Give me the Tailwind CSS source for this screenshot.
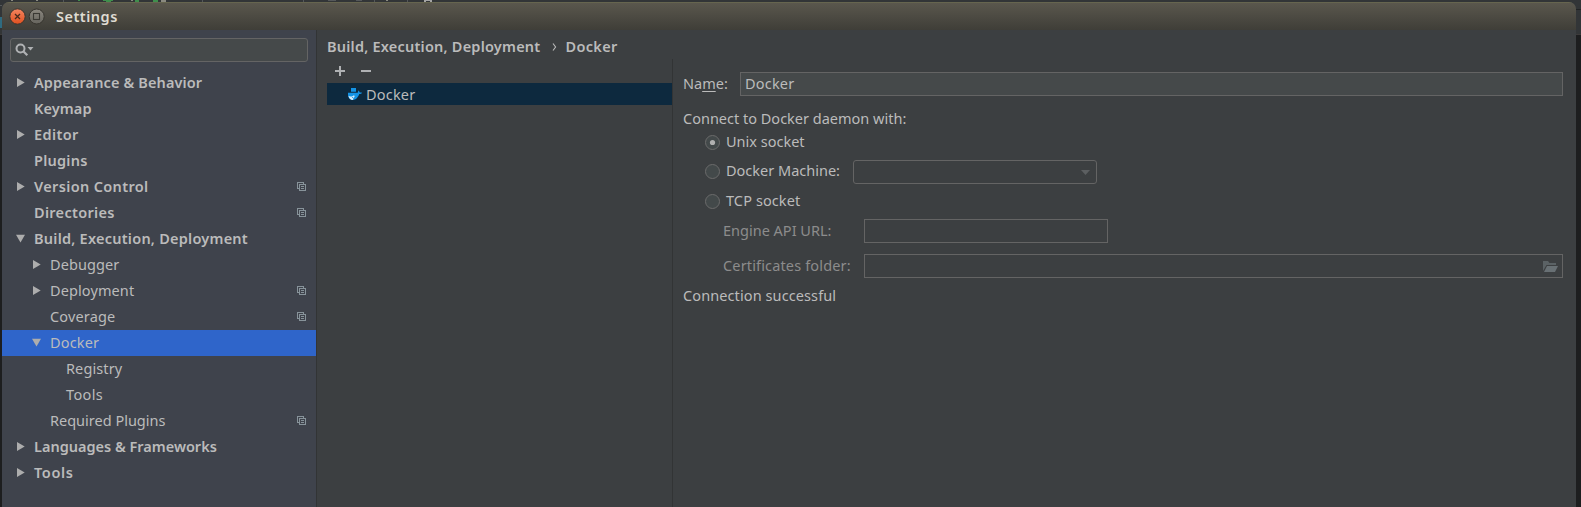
<!DOCTYPE html>
<html lang="en">
<head>
<meta charset="utf-8">
<title>Settings</title>
<script src="https://cdn.jsdelivr.net/npm/@tailwindcss/browser@4"></script>
</head>
<body class="relative flex h-[507px] w-[1581px] flex-col overflow-hidden bg-[#1d1e1f] font-['Noto_Sans',sans-serif] text-[14.5px] text-[#bbbbbb]">

<!-- IDE window behind the dialog -->
<svg class="absolute left-0 top-0" width="1581" height="36" shape-rendering="crispEdges">
  <rect width="1581" height="35" fill="#323537"/>
  <rect y="34" width="1581" height="1" fill="#3d3b3b"/>
  <rect x="1576" y="9" width="5" height="1" fill="#222425"/>
  <rect y="5" width="2" height="1" fill="#55585a"/>
  <rect y="17" width="2" height="11" fill="#2f6b80"/>
  <g fill="#8a8a80"><rect x="11" width="2" height="1"/><rect x="36" width="2" height="1"/><rect x="131" width="2" height="1"/><rect x="161" width="5" height="2"/><rect x="386" width="2" height="1"/></g>
  <g fill="#3f8f4d"><rect x="78" width="2" height="1"/><rect x="103" width="10" height="1"/><rect x="106" y="1" width="5" height="1"/><rect x="135" width="4" height="2"/><rect x="153" width="5" height="2"/></g>
  <g fill="#55585a"><rect x="63" width="1" height="2"/><rect x="202" width="1" height="2"/><rect x="303" width="1" height="2"/><rect x="328" width="8" height="1"/><rect x="356" width="6" height="1"/><rect x="374" width="1" height="2"/><rect x="407" width="1" height="2"/></g>
  <path d="M424 2V0h8v2h-2v-1h-4v1z" fill="#a5a5a5"/>
</svg>

<div class="relative ml-[2px] mt-[2px] flex w-[1574px] grow flex-col overflow-hidden rounded-t-[7px] bg-[#3c3f41]">
  <!-- title bar -->
  <header class="flex h-7 shrink-0 items-center border-t border-[#66654f] bg-linear-to-b from-[#5a574d] to-[#3f3e38] pl-[7px]">
    <svg class="mb-px shrink-0" width="40" height="18" viewBox="0 0 40 18">
      <defs>
        <linearGradient id="red" x1="0" y1="0" x2="0" y2="1"><stop offset="0" stop-color="#f58560"/><stop offset="1" stop-color="#e0501f"/></linearGradient>
        <linearGradient id="gry" x1="0" y1="0" x2="0" y2="1"><stop offset="0" stop-color="#8b8880"/><stop offset="1" stop-color="#66645d"/></linearGradient>
      </defs>
      <circle cx="8.5" cy="9.500" r="7.7" fill="url(#red)" stroke="#37352f" stroke-width="1"/>
      <path d="M6 7l5 5M11 7l-5 5" stroke="#4a2a1c" stroke-width="1.3"/>
      <circle cx="27.7" cy="9.500" r="7.5" fill="url(#gry)" stroke="#37352f" stroke-width="1"/>
      <rect x="24.5" y="6.500" width="6" height="6" fill="none" stroke="#3a3934" stroke-width="1.1"/>
    </svg>
    <h1 class="mb-0.5 ml-[7px] font-semibold leading-7 tracking-[0.5px] text-[#dfdbd2]">Settings</h1>
  </header>

  <div class="flex min-h-0 grow">
    <!-- category tree -->
    <aside class="flex w-[315px] shrink-0 flex-col border-r border-[#323435] bg-[#3f434c]">
      <div class="mx-2 mt-2 flex h-6 shrink-0 items-center rounded-[3px] border border-[#646464] bg-[#45494a] pl-1">
        <svg class="mb-px" width="20" height="14" viewBox="0 0 20 14"><circle cx="5.500" cy="5.500" r="4" fill="none" stroke="#afb1b3" stroke-width="2"/><path d="M8.300 8.300l4 4" stroke="#afb1b3" stroke-width="2.200"/><path d="M12.500 4h6l-3 3.600z" fill="#afb1b3"/></svg>
      </div>
      <nav class="mt-2 flex flex-col font-semibold leading-[26px] *:flex *:h-[26px] *:shrink-0 *:items-center *:whitespace-nowrap [&_span]:mb-0.5 [&_svg]:mb-px">
        <div class="pl-[14px]"><svg class="mr-[9px]" width="9" height="9"><path d="M1 0l7.700 4.500L1 9z" fill="#adadad"/></svg><span class="tracking-[0.12px]">Appearance &amp; Behavior</span></div>
        <div class="pl-8"><span class="tracking-[0.1px]">Keymap</span></div>
        <div class="pl-[14px]"><svg class="mr-[9px]" width="9" height="9"><path d="M1 0l7.700 4.500L1 9z" fill="#adadad"/></svg><span class="tracking-[0.4px]">Editor</span></div>
        <div class="pl-8"><span class="tracking-[0.25px]">Plugins</span></div>
        <div class="pl-[14px] pr-[10px]"><svg class="mr-[9px]" width="9" height="9"><path d="M1 0l7.700 4.500L1 9z" fill="#adadad"/></svg><span class="tracking-[0.35px]">Version Control</span><svg class="ml-auto" width="9" height="9"><use href="#copy"/></svg></div>
        <div class="pl-8 pr-[10px]"><span class="tracking-[0.3px]">Directories</span><svg class="ml-auto" width="9" height="9"><use href="#copy"/></svg></div>
        <div class="pl-[14px]"><svg class="mr-[9px]" width="9" height="9"><path d="M0 .7h9L4.500 8.500z" fill="#adadad"/></svg><span class="tracking-[0.24px]">Build, Execution, Deployment</span></div>
        <div class="pl-[30px] font-normal"><svg class="mr-[9px]" width="9" height="9"><path d="M1 0l7.700 4.500L1 9z" fill="#adadad"/></svg><span class="tracking-[0.1px]">Debugger</span></div>
        <div class="pl-[30px] pr-[10px] font-normal"><svg class="mr-[9px]" width="9" height="9"><path d="M1 0l7.700 4.500L1 9z" fill="#adadad"/></svg><span class="tracking-[0.1px]">Deployment</span><svg class="ml-auto" width="9" height="9"><use href="#copy"/></svg></div>
        <div class="pl-12 pr-[10px] font-normal"><span class="tracking-[0.15px]">Coverage</span><svg class="ml-auto" width="9" height="9"><use href="#copy"/></svg></div>
        <div class="bg-[#2f65ca] pl-[30px] font-normal"><svg class="mr-[9px]" width="9" height="9"><path d="M0 .7h9L4.500 8.500z" fill="#adadad"/></svg><span class="tracking-[0.15px]">Docker</span></div>
        <div class="pl-16 font-normal"><span class="tracking-[0.1px]">Registry</span></div>
        <div class="pl-16 font-normal"><span class="tracking-[0.35px]">Tools</span></div>
        <div class="pl-12 pr-[10px] font-normal"><span>Required Plugins</span><svg class="ml-auto" width="9" height="9"><use href="#copy"/></svg></div>
        <div class="pl-[14px]"><svg class="mr-[9px]" width="9" height="9"><path d="M1 0l7.700 4.500L1 9z" fill="#adadad"/></svg><span>Languages &amp; Frameworks</span></div>
        <div class="pl-[14px]"><svg class="mr-[9px]" width="9" height="9"><path d="M1 0l7.700 4.500L1 9z" fill="#adadad"/></svg><span class="tracking-[0.6px]">Tools</span></div>
      </nav>
    </aside>

    <main class="flex min-w-0 grow flex-col">
      <div class="flex h-[29px] shrink-0 items-center whitespace-nowrap pl-[10px] pt-[3px] font-semibold leading-6">
        <span class="tracking-[0.22px]">Build, Execution, Deployment</span>
        <svg class="ml-[12px] mr-[8px] mt-0.5" width="5" height="8"><path d="M1 .5L3.600 4L1 7.500" fill="none" stroke="#bbbbbb" stroke-width="1.100"/></svg>
        <span class="tracking-[0.35px]">Docker</span>
      </div>
      <div class="flex min-h-0 grow">
        <!-- configured servers -->
        <section class="flex w-[356px] shrink-0 flex-col border-r border-[#323435] pl-[10px]">
          <div class="flex h-6 shrink-0 items-center gap-4 pl-2">
            <svg width="10" height="10" shape-rendering="crispEdges"><path d="M4 0h2v4h4v2H6v4H4V6H0V4h4z" fill="#afb1b3"/></svg>
            <svg width="10" height="10" shape-rendering="crispEdges"><path d="M0 4h10v2H0z" fill="#afb1b3"/></svg>
          </div>
          <div class="flex h-[22px] shrink-0 items-center bg-[#0d293e] pl-[21px] leading-[22px]">
            <svg class="mr-1 mt-px" width="14" height="13"><path d="M3 0h5v3.800H3z" fill="#1494e6"/><path d="M0 7V4.800h9.600c.6-.3.7-1.200.3-2.200 1 .2 1.600.9 1.800 1.900.8-.2 1.500-.1 2.300.3-.6 1-1.400 1.300-2.700 1.300C10 9.500 8 12 4.800 12 1.800 12 .3 10 0 7z" fill="#1494e6"/><path d="M.4 7.800c1.300 1 3 1 4.300.2l1.300-.8c.8.800.8 1.700 0 2.300-.6.800-.7 2.500-1.200 2.500C2.500 12 1 10.500.4 7.800z" fill="#d5ecfa"/><path d="M4 9l1.800 1.500" stroke="#1494e6" stroke-width=".9"/></svg>
            <span class="tracking-[0.2px]">Docker</span>
          </div>
        </section>

        <!-- connection form -->
        <section class="flex min-w-0 grow flex-col whitespace-nowrap pl-[10px] pr-[13px] [&_span]:mb-0.5">
          <div class="mt-[13px] flex h-6 items-center leading-6">
            <label class="mb-0.5 w-[57px] shrink-0">Na<u class="underline decoration-1 underline-offset-2">m</u>e:</label>
            <div class="h-6 grow border border-[#646464] bg-[#45494a] pl-1 leading-5 tracking-[0.2px]">Docker</div>
          </div>
          <p class="mb-px mt-[10px] h-6 leading-6">Connect to Docker daemon with:</p>
          <div class="flex h-6 items-center pl-[22px]">
            <svg class="mb-px mr-[6px]" width="15" height="15"><circle cx="7.500" cy="7.500" r="7" fill="#43494a" stroke="#6b6b6b"/><circle cx="7.500" cy="7.500" r="2.600" fill="#b0b0b0"/></svg>
            <span class="pb-0.5 leading-6">Unix socket</span>
          </div>
          <div class="mt-[5px] flex h-6 items-center pl-[22px]">
            <svg class="mb-px mr-[6px]" width="15" height="15"><circle cx="7.500" cy="7.500" r="7" fill="#43494a" stroke="#6b6b6b"/></svg>
            <span class="w-[127px] pb-0.5 leading-6">Docker Machine:</span>
            <div class="flex h-6 w-[244px] items-center justify-end rounded-[3px] border border-[#646464] pr-[6px]"><svg width="9" height="5"><path d="M0 0h9L4.500 5z" fill="#5c5f61"/></svg></div>
          </div>
          <div class="mt-[6px] flex h-6 items-center pl-[22px]">
            <svg class="mb-px mr-[6px]" width="15" height="15"><circle cx="7.500" cy="7.500" r="7" fill="#43494a" stroke="#6b6b6b"/></svg>
            <span class="pb-0.5 leading-6 tracking-[0.1px]">TCP socket</span>
          </div>
          <div class="mt-[5px] flex h-6 items-center pl-10 leading-6 text-[#8c8c8c]">
            <span class="w-[141px] shrink-0">Engine API URL:</span>
            <div class="h-6 w-[244px] border border-[#646464]"></div>
          </div>
          <div class="mt-[11px] flex h-6 items-center pl-10 leading-6 text-[#8c8c8c]">
            <span class="w-[141px] shrink-0 tracking-[0.15px]">Certificates folder:</span>
            <div class="flex h-6 grow items-center justify-end border border-[#646464] pr-1"><svg width="15" height="11"><path d="M0 10V0h5l1.500 2H13v2H3.500z" fill="#5b6265"/><path d="M4 5h11l-3 6H1z" fill="#687074"/></svg></div>
          </div>
          <p class="mt-[5px] h-6 leading-6 tracking-[0.1px]">Connection successful</p>
        </section>
      </div>
    </main>
  </div>
</div>

<svg class="absolute" width="0" height="0"><defs><g id="copy" fill="none" stroke="#87939a" shape-rendering="crispEdges"><path d="M2.500 6.500h-2v-6h6v2"/><path d="M2.500 2.500h6v6h-6z"/><path d="M4 4.500h3M4 6.500h3"/></g></defs></svg>
</body>
</html>
